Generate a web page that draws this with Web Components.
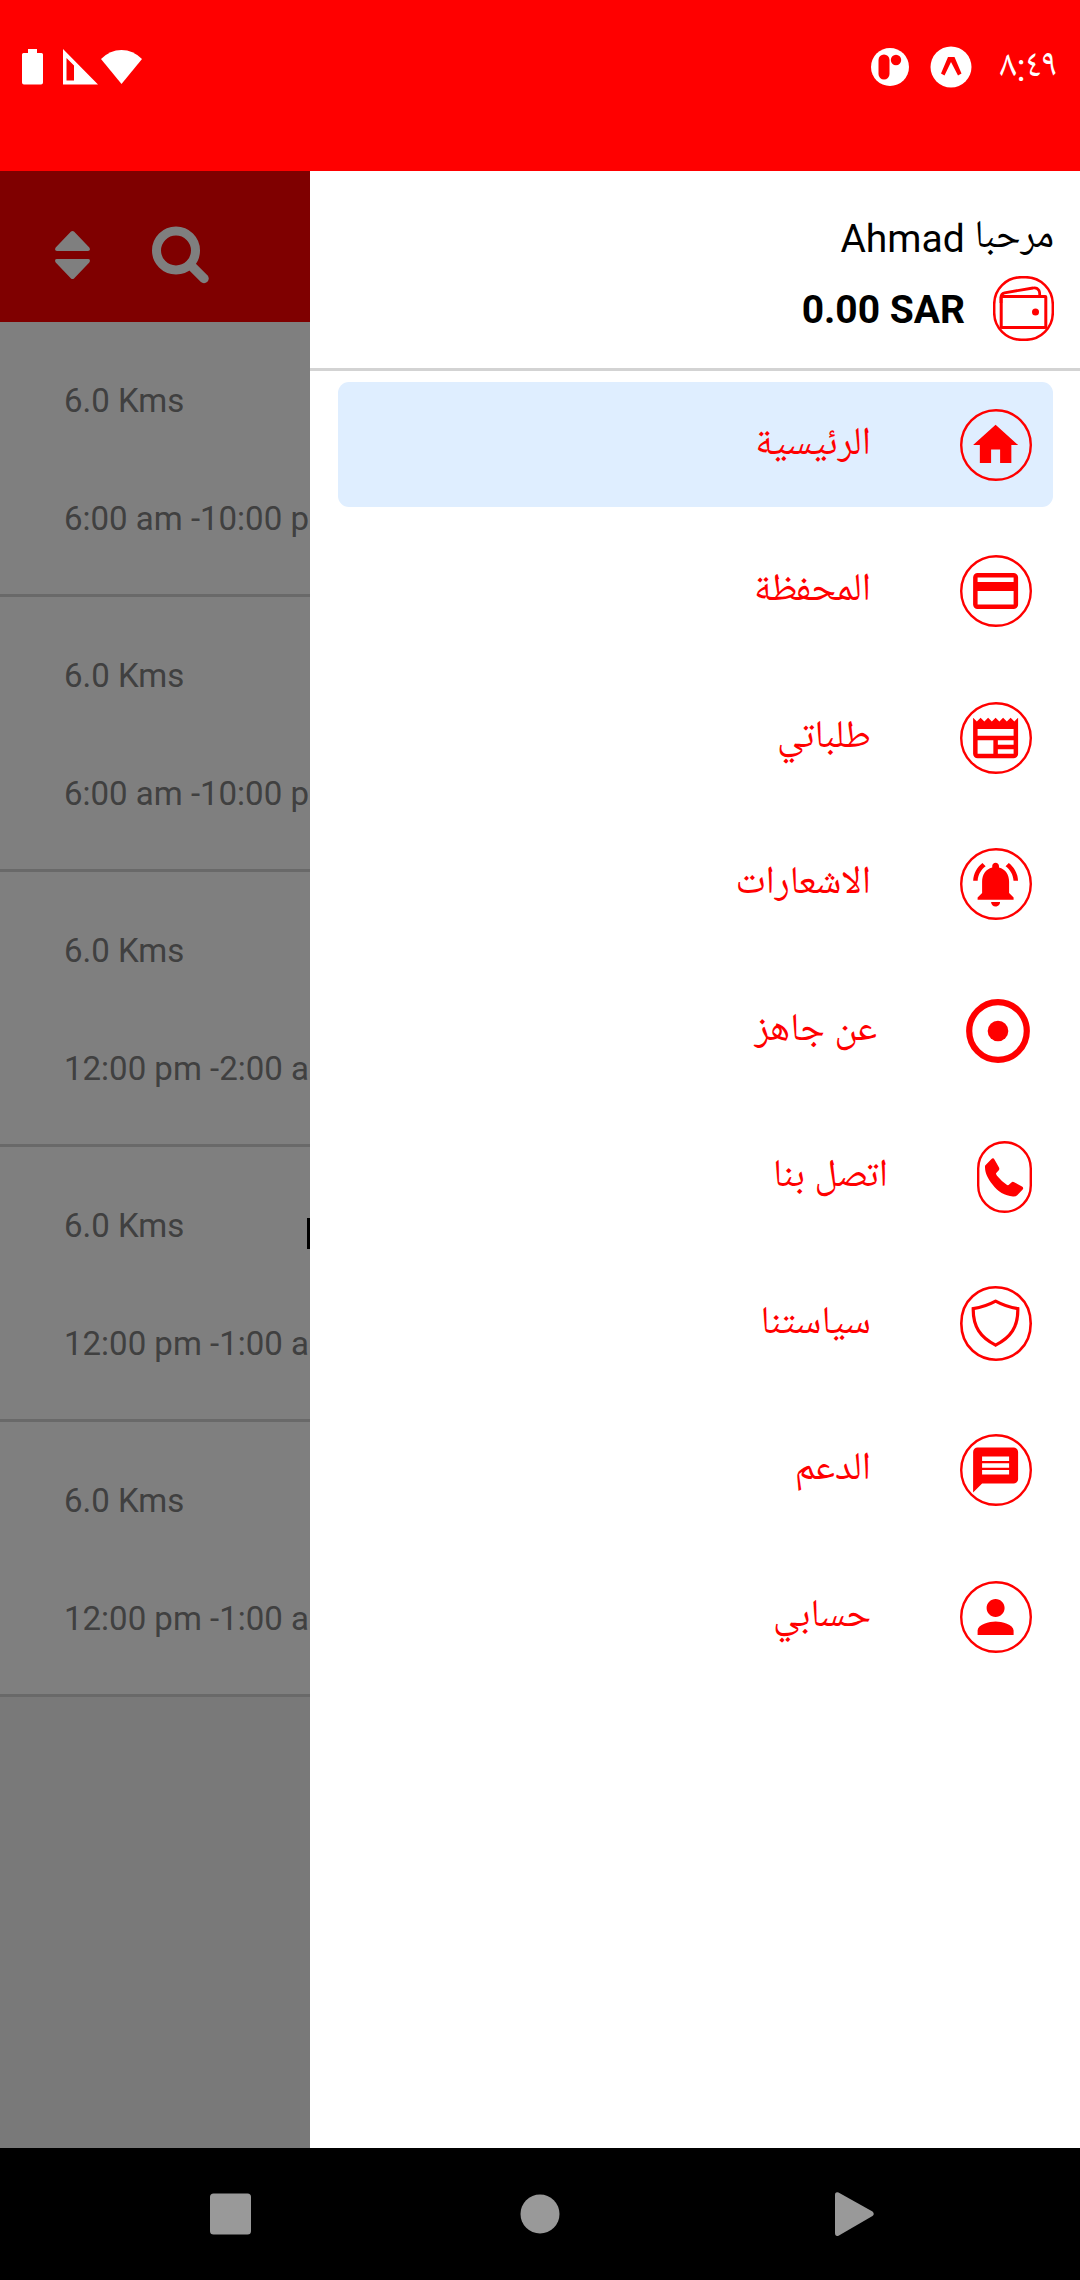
<!DOCTYPE html>
<html lang="ar">
<head>
<meta charset="utf-8">
<meta name="viewport" content="width=device-width, initial-scale=1">
<title>جاهز</title>
<style>
html, body { margin: 0; height: 100%; }
body { font-family: Roboto, "Noto Naskh Arabic UI", "Noto Naskh Arabic", "Noto Sans Arabic", "DejaVu Sans", sans-serif; background: #000; }
</style>
</head>
<body>
<app-screen></app-screen>
<script>
const define = (name, html) => customElements.define(name, class extends HTMLElement {
  connectedCallback() {
    if (this.shadowRoot) return;
    const t = document.createElement('template');
    t.innerHTML = html;
    this.attachShadow({ mode: 'open' }).append(t.content.cloneNode(true));
  }
});

const GLYPHS = {
  home: '<path d="M10 20v-6h4v6h5v-8h3L12 3 2 12h3v8z"/>',
  card: '<path d="M20 4H4c-1.11 0-1.99.89-1.99 2L2 18c0 1.11.89 2 2 2h16c1.11 0 2-.89 2-2V6c0-1.11-.89-2-2-2zm0 14H4v-6h16v6zm0-10H4V6h16v2z"/>',
  orders: '<path d="M22 3l-1.67 1.67L18.67 3 17 4.67 15.33 3l-1.66 1.67L12 3l-1.67 1.67L8.67 3 7 4.67 5.33 3 3.67 4.67 2 3v16c0 1.1.9 2 2 2h16c1.1 0 2-.9 2-2V3zM11 19H4v-6h7v6zm9 0h-7v-2h7v2zm0-4h-7v-2h7v2zm0-4H4V8h16v3z"/>',
  bell: '<path d="M7.58 4.08L6.15 2.65C3.75 4.48 2.17 7.3 2.03 10.5h2c.15-2.65 1.51-4.97 3.55-6.42zm12.39 6.42h2c-.15-3.2-1.73-6.02-4.12-7.85l-1.42 1.43c2.02 1.45 3.39 3.77 3.54 6.42zM18 11c0-3.07-1.64-5.64-4.5-6.32V4c0-.83-.67-1.5-1.5-1.5s-1.5.67-1.5 1.5v.68C7.63 5.36 6 7.92 6 11v5l-2 2v1h16v-1l-2-2v-5zm-6 11c.14 0 .27-.01.4-.04.65-.14 1.18-.58 1.44-1.18.1-.24.15-.5.15-.78h-4c.01 1.1.9 2 2.01 2z"/>',
  chat: '<path d="M20 2H4c-1.1 0-1.99.9-1.99 2L2 22l4-4h14c1.1 0 2-.9 2-2V4c0-1.1-.9-2-2-2zm-2 12H6v-2h12v2zm0-3H6V9h12v2zm0-3H6V6h12v2z"/>',
  person: '<path d="M12 12c2.21 0 4-1.79 4-4s-1.79-4-4-4-4 1.79-4 4 1.79 4 4 4zm0 2c-2.67 0-8 1.34-8 4v2h16v-2c0-2.66-5.33-4-8-4z"/>'
};
const menuSvg = {
  shield: '<svg width="72" height="75" viewBox="0 0 72 75" fill="none" stroke="currentColor"><path stroke-width="2.6" d="M35.5 1.3C20 1.3 1.3 13 1.3 37.5S20 73.7 36 73.7 70.7 62 70.7 37.5 52 1.3 35.5 1.3z"/><path stroke-width="3.2" d="M35.6 15.2Q25 21 13.2 22.6C13 41 20.500 51.500 35.600 59.100C50.700 51.500 58.200 41 57.800 22.600Q46.200 21 35.600 15.200z"/></svg>',
  target: '<svg width="66" height="66" viewBox="0 0 66 66"><circle cx="32" cy="33" r="28.800" fill="none" stroke="currentColor" stroke-width="6.200"/><circle cx="32" cy="33" r="10.300" fill="currentColor"/></svg>',
  phone: '<svg width="55" height="72" viewBox="0 0 55 72"><rect x="1.200" y="1.200" width="52.600" height="69.600" rx="26.300" fill="none" stroke="currentColor" stroke-width="2.400"/><path fill="currentColor" d="M8.200 24.500 14.500 18Q16.300 16.400 17.600 18.800L22 26.500Q22.800 28.200 21.600 29.500L19 32.200Q19 33.500 20 34.800Q24.300 40 29.400 43.600Q30.500 44.400 31.600 44L34.400 41.400Q35.600 40.400 37.200 41.200L45 45.600Q47 46.800 45.700 48.400L40.200 54.200Q38.800 55.600 36 55.400C28 55 20.500 50.600 15.500 43.600C10.500 37 8.200 32.500 8 26.500Q7.900 25 8.200 24.500z"/></svg>'
};
for (const [k, g] of Object.entries(GLYPHS))
  menuSvg[k] = `<svg width="72" height="72" viewBox="0 0 72 72"><circle cx="36" cy="36" r="34.800" fill="none" stroke="currentColor" stroke-width="2.400"/><svg x="8.600" y="9" width="54" height="54" viewBox="0 0 24 24" fill="currentColor">${g}</svg></svg>`;

customElements.define('menu-icon', class extends HTMLElement {
  connectedCallback() {
    if (this.shadowRoot) return;
    this.attachShadow({ mode: 'open' }).innerHTML =
      `<style>:host{display:block;flex:none} svg{display:block}</style>${menuSvg[this.getAttribute('name')]}`;
  }
});

customElements.define('menu-item', class extends HTMLElement {
  connectedCallback() {
    if (this.shadowRoot) return;
    this.attachShadow({ mode: 'open' }).innerHTML = `
      <style>
      :host { display: block; }
      :host([active]) a { background: #dfeeff; }
      a { display: flex; align-items: center; gap: 89px; height: 125px; box-sizing: border-box; padding: 0 21px; border-radius: 11px; color: #f00; text-decoration: none; font-size: 39px; line-height: 48px; }
      span { padding-top: 2px; }
      </style>
      <a href="#${this.getAttribute('icon')}"><menu-icon name="${this.getAttribute('icon')}"></menu-icon><span><slot></slot></span></a>`;
  }
});

define('status-bar', `
<style>
:host { display: flex; justify-content: space-between; height: 171px; padding: 0 22px; box-sizing: border-box; background: #f00; color: #fff; }
.side { display: flex; align-items: center; height: 134px; }
svg { display: block; }
.signal { margin-left: 20px; } .wifi { margin-left: 3px; }
.expo { margin: 0 28px 0 21px; }
time { font-size: 38px; line-height: 48px; padding-top: 2px; }
</style>
<div class="side">
<svg width="21" height="36" viewBox="0 0 21 36" fill="currentColor"><path d="M6 0h9v4h4.500Q21 4 21 5.500v28Q21 35.500 19 35.500H2Q0 35.500 0 33.500v-28Q0 4 1.500 4H6z"/></svg>
<svg class="signal" width="35" height="36" viewBox="0 0 35 36"><path fill="currentColor" fill-rule="evenodd" d="M0 0 35 35.500H0zM3.500 9v22.500H11V16.500z"/></svg>
<svg class="wifi" width="42" height="36" viewBox="0 0 42 36"><path fill="currentColor" d="M0 10Q9 1 20.500 1T41 10L20.500 35z"/></svg>
</div>
<div class="side">
<svg width="38" height="38" viewBox="0 0 38 38"><circle cx="19" cy="19" r="19" fill="#fff"/><rect x="7.500" y="6.500" width="11" height="25" rx="5.500" fill="#f00"/><circle cx="25" cy="12" r="5.200" fill="#f00"/></svg>
<svg class="expo" width="42" height="42" viewBox="0 0 42 42"><circle cx="21" cy="21" r="20.500" fill="#fff"/><path fill="#f00" d="M18 11h6.500L31.500 27.500 28 29.500 21 16 14.500 29.500 11 27.500z"/></svg>
<time datetime="20:49">٨:٤٩</time>
</div>`);

define('branch-row', `
<style>
:host { display: flex; flex-direction: column; gap: 80px; height: 275px; box-sizing: border-box; padding: 60px 64px 0; border-bottom: 3px solid #d3d3d3; background: #fff; color: #808080; font-size: 33px; line-height: 38px; white-space: nowrap; position: relative; }
</style>
<slot name="distance"></slot><slot name="hours"></slot><slot name="name"></slot>`);

define('branch-list', `
<style>
:host { display: block; background: #f2f2f2; overflow: hidden; position: relative; }
:host::after { content: ""; position: absolute; inset: 0; background: rgba(0,0,0,.5); }
header { display: flex; align-items: center; gap: 62px; height: 151px; box-sizing: border-box; padding: 16px 55px 0; background: #f00; }
button { border: 0; padding: 0; background: none; color: #fff; }
svg { display: block; }
i { position: absolute; left: 307px; top: 71px; width: 20px; height: 31px; background: #000; }
</style>
<header>
<button aria-label="ترتيب"><svg width="35" height="50" viewBox="0 0 35 50" fill="currentColor"><path d="M16 1.600Q17.500.300 19 1.600L34.300 17.500Q36 20.900 33 20.900H2Q-1 20.900.700 17.500zM16 48.400Q17.500 49.700 19 48.400L34.300 32.500Q36 29.100 33 29.100H2Q-1 29.100.700 32.500z"/></svg></button>
<button aria-label="بحث"><svg width="58" height="58" viewBox="0 0 58 58" fill="none" stroke="currentColor"><circle cx="24" cy="24.500" r="19.500" stroke-width="9"/><path stroke-width="9.500" stroke-linecap="round" d="M40 40.500 52 52.500"/></svg></button>
</header>
<branch-row><span slot="distance">6.0 Kms</span><span slot="hours">6:00 am -10:00 pm</span></branch-row>
<branch-row><span slot="distance">6.0 Kms</span><span slot="hours">6:00 am -10:00 pm</span></branch-row>
<branch-row><span slot="distance">6.0 Kms</span><span slot="hours">12:00 pm -2:00 am</span></branch-row>
<branch-row><span slot="distance">6.0 Kms</span><span slot="hours">12:00 pm -1:00 am</span><i slot="name"></i></branch-row>
<branch-row><span slot="distance">6.0 Kms</span><span slot="hours">12:00 pm -1:00 am</span></branch-row>`);

define('side-drawer', `
<style>
:host { display: block; background: #fff; color: #000; direction: rtl; }
header { display: flex; flex-direction: column; height: 200px; box-sizing: border-box; padding: 44px 26px 0; border-bottom: 3px solid #d3d3d3; font-size: 39px; }
.hello { line-height: 48px; }
.balance { display: flex; align-items: center; gap: 28px; margin-top: 13px; line-height: 48px; }
b { direction: ltr; padding-top: 2px; }
svg { display: block; color: #f00; }
nav { display: flex; flex-direction: column; justify-content: space-between; height: 1297px; margin: 11px 27px 0 28px; }
</style>
<header>
<span class="hello">مرحبا Ahmad</span>
<div class="balance">
<svg width="61" height="65" viewBox="0 0 61 65" fill="none" stroke="currentColor"><rect x="1.200" y="1.200" width="58.600" height="62.600" rx="27" stroke-width="2.500"/><rect x="8.200" y="20.500" width="44.600" height="31" rx=".500" stroke-width="3"/><path stroke-width="2.800" d="M8 27V21.500Q8 17.500 11.500 16.800L40 12Q44 11.200 46 14.500Q46.800 16 46.800 20"/><circle cx="42.500" cy="36" r="3.500" fill="currentColor" stroke="none"/></svg>
<b>0.00 SAR</b>
</div>
</header>
<nav>
<menu-item icon="home" active>الرئيسية</menu-item>
<menu-item icon="card">المحفظة</menu-item>
<menu-item icon="orders">طلباتي</menu-item>
<menu-item icon="bell">الاشعارات</menu-item>
<menu-item icon="target">عن جاهز</menu-item>
<menu-item icon="phone">اتصل بنا</menu-item>
<menu-item icon="shield">سياستنا</menu-item>
<menu-item icon="chat">الدعم</menu-item>
<menu-item icon="person">حسابي</menu-item>
</nav>`);

define('system-nav', `
<style>
:host { display: flex; justify-content: space-between; align-items: center; height: 132px; padding: 0 208px; box-sizing: border-box; background: #000; }
button { border: 0; padding: 0; background: none; color: #999; }
svg { display: block; overflow: visible; }
</style>
<button aria-label="Recents"><svg width="46" height="46" viewBox="0 0 46 46" fill="currentColor"><rect x="2" y="2.500" width="41" height="41" rx="3.500"/></svg></button>
<button aria-label="Home"><svg width="46" height="46" viewBox="0 0 46 46" fill="currentColor"><circle cx="23" cy="23" r="19.500"/></svg></button>
<button aria-label="Back"><svg width="46" height="46" viewBox="0 0 46 46" fill="currentColor"><path d="M9 4Q9 .500 12.500 1.500L46.500 20.500Q49 23 46.500 25L12.500 44.800Q9 45.800 9 42z"/></svg></button>`);

define('app-screen', `
<style>
:host { display: flex; flex-direction: column; min-height: 100vh; }
main { flex: 1; display: grid; grid-template-columns: minmax(0, 1fr) 770px; }
</style>
<status-bar></status-bar>
<main><branch-list></branch-list><side-drawer></side-drawer></main>
<system-nav></system-nav>`);
</script>
</body>
</html>
